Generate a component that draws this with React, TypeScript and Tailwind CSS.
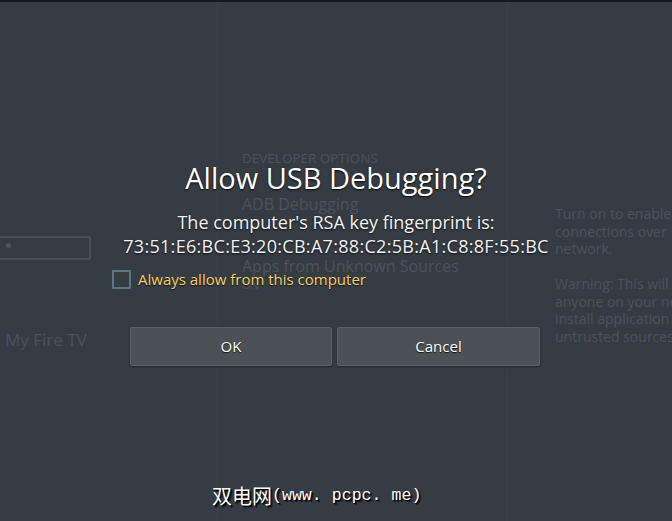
import React from "react";

const faint = "text-[#4c535b]";

export default function App() {
  return (
    <div
      className="relative w-[672px] h-[521px] overflow-hidden bg-[#363c44]"
      style={{ fontFamily: '"Open Sans", "Noto Sans", sans-serif' }}
    >
      <div className="h-[2px] bg-[#16191c]" />
      {/* background settings screen */}
      <div className="flex h-[519px]">
        <div className="w-[218px] shrink-0 border-r border-[#3b4149] flex flex-col">
          <div className="mt-[234px] ml-[-2px] w-[93px] h-[24px] border-2 border-[#4a5058] rounded-[3px] relative">
            <div className="absolute left-[6px] top-[5px] w-[5px] h-[5px] rounded-full bg-[#4e555d]" />
          </div>
          <div className={`mt-[67px] ml-[5px] text-[17px] ${faint}`}>My Fire TV</div>
        </div>
        <div className="w-[290px] shrink-0 border-r border-[#3b4149] pl-[24px] flex flex-col">
          <div className={`mt-[148px] text-[13.5px] leading-[16px] ${faint}`}>DEVELOPER OPTIONS</div>
          <div className={`mt-[28px] text-[16px] leading-[20px] ${faint}`}>ADB Debugging</div>
          <div className={`mt-[42px] text-[16px] leading-[20px] ${faint}`}>Apps from Unknown Sources</div>
          <div className={`mt-[3px] text-[11px] leading-[12px] ${faint}`}>ON</div>
        </div>
        <div className={`flex-1 min-w-0 overflow-hidden pl-[47px] text-[14px] leading-[17.5px] whitespace-nowrap ${faint}`}>
          <div className="mt-[203px]">Turn on to enable</div>
          <div>connections over</div>
          <div>network.</div>
          <div className="mt-[17.5px]">Warning: This will</div>
          <div>anyone on your ne</div>
          <div>install application</div>
          <div>untrusted sources</div>
        </div>
      </div>

      {/* dialog overlay */}
      <div className="absolute inset-0 flex flex-col items-center">
        <div className="mt-[160px] text-[29px] leading-[36px] text-white [text-shadow:0_1px_2px_rgba(0,0,0,0.9)]">
          Allow USB Debugging?
        </div>
        <div className="mt-[14px] text-[18px] leading-[24px] text-[#f2f2f2] [text-shadow:0_1px_2px_rgba(0,0,0,0.8)] text-center">
          <div>The computer's RSA key fingerprint is:</div>
          <div className="tracking-[0.3px]">73:51:E6:BC:E3:20:CB:A7:88:C2:5B:A1:C8:8F:55:BC</div>
        </div>
        <div className="self-start ml-[112px] mt-[11px] flex items-center gap-[7px]">
          <div className="w-[19px] h-[19px] border-2 border-[#587684] bg-[#363c44] rounded-[1px]" />
          <div className="text-[15px] leading-[20px] text-[#f6d061] [text-shadow:0_1px_1px_rgba(0,0,0,0.7)]">
            Always allow from this computer
          </div>
        </div>
        <div className="self-start ml-[130px] mt-[38px] flex gap-[5px]">
          <button className="w-[202px] h-[39px] bg-[#4b5156] border border-[#5b6167] rounded-[2px] text-[15px] text-white [text-shadow:0_1px_1px_rgba(0,0,0,0.8)] shadow-[0_1px_2px_rgba(0,0,0,0.4)]">
            OK
          </button>
          <button className="w-[203px] h-[39px] bg-[#4b5156] border border-[#5b6167] rounded-[2px] text-[15px] text-white [text-shadow:0_1px_1px_rgba(0,0,0,0.8)] shadow-[0_1px_2px_rgba(0,0,0,0.4)]">
            Cancel
          </button>
        </div>
        <div className="self-start ml-[212px] mt-[116px] h-[28px] flex items-center text-white [text-shadow:1px_1px_0_#000,2px_2px_1px_rgba(0,0,0,0.7)]">
          <span
            className="text-[20px] leading-[28px]"
            style={{ fontFamily: '"Noto Sans CJK SC", sans-serif' }}
          >
            双电网
          </span>
          <span
            className="text-[16.6px] leading-[28px] whitespace-pre"
            style={{ fontFamily: '"Liberation Mono", monospace' }}
          >
            (www. pcpc. me)
          </span>
        </div>
      </div>
    </div>
  );
}
